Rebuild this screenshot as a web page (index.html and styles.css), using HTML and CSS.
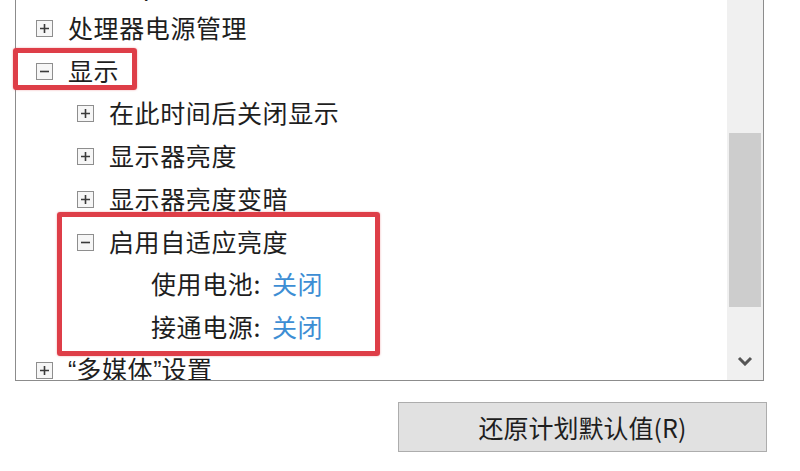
FILE: index.html
```html
<!DOCTYPE html>
<html lang="zh-CN">
<head>
<meta charset="utf-8">
<link rel="stylesheet" href="styles.css">
</head>
<body>
<div class="window">
  <div class="tree">
    <div class="list">
      <div class="row lvl0"><svg class="exp" viewBox="0 0 17 17"><rect x="0.5" y="0.5" width="16" height="16"/><path d="M4 8.5h9M8.5 4v9"/></svg><span class="label">PCI Express</span></div>
      <div class="row lvl0"><svg class="exp" viewBox="0 0 17 17"><rect x="0.5" y="0.5" width="16" height="16"/><path d="M4 8.5h9M8.5 4v9"/></svg><span class="label">处理器电源管理</span></div>
      <div class="row lvl0"><svg class="exp" viewBox="0 0 17 17"><rect x="0.5" y="0.5" width="16" height="16"/><path d="M4 8.5h9"/></svg><span class="label">显示</span></div>
      <div class="row lvl1"><svg class="exp" viewBox="0 0 17 17"><rect x="0.5" y="0.5" width="16" height="16"/><path d="M4 8.5h9M8.5 4v9"/></svg><span class="label">在此时间后关闭显示</span></div>
      <div class="row lvl1"><svg class="exp" viewBox="0 0 17 17"><rect x="0.5" y="0.5" width="16" height="16"/><path d="M4 8.5h9M8.5 4v9"/></svg><span class="label">显示器亮度</span></div>
      <div class="row lvl1"><svg class="exp" viewBox="0 0 17 17"><rect x="0.5" y="0.5" width="16" height="16"/><path d="M4 8.5h9M8.5 4v9"/></svg><span class="label">显示器亮度变暗</span></div>
      <div class="row lvl1"><svg class="exp" viewBox="0 0 17 17"><rect x="0.5" y="0.5" width="16" height="16"/><path d="M4 8.5h9"/></svg><span class="label">启用自适应亮度</span></div>
      <div class="row lvl2"><span class="label">使用电池:</span><span class="value">关闭</span></div>
      <div class="row lvl2"><span class="label">接通电源:</span><span class="value">关闭</span></div>
      <div class="row lvl0"><svg class="exp" viewBox="0 0 17 17"><rect x="0.5" y="0.5" width="16" height="16"/><path d="M4 8.5h9M8.5 4v9"/></svg><span class="label"><span class="q">“</span>多媒体<span class="q">”</span>设置</span></div>
    </div>
    <div class="scroll">
      <div class="thumb"></div>
      <div class="arrow"><svg width="16" height="10" viewBox="0 0 16 10"><path d="M2 2l6 6 6-6" fill="none" stroke="#555555" stroke-width="3"/></svg></div>
    </div>
  </div>
  <div class="actions">
    <button class="btn">还原计划默认值(R)</button>
  </div>
  <div class="mark mark-a"></div>
  <div class="mark mark-b"></div>
</div>
</body>
</html>
```

FILE: styles.css
```css
html, body {
  margin: 0;
  padding: 0;
  background: #ffffff;
}
body {
  font-family: "Noto Sans CJK SC", "Noto Sans", sans-serif;
  color: #1e1e1e;
}
.window {
  position: relative;
  width: 800px;
  height: 471px;
  overflow: hidden;
}
.tree {
  display: flex;
  box-sizing: border-box;
  margin: -40px 0 0 15px;
  width: 749px;
  height: 421px;
  border: 1px solid #8c8c8c;
  overflow: hidden;
  background: #fff;
}
.list {
  flex: 1;
  padding-top: 3.25px;
}
.row {
  display: flex;
  align-items: center;
  height: 42.75px;
  font-size: 25px;
  letter-spacing: 0.6px;
  line-height: 1;
  white-space: nowrap;
}
.row .label {
  position: relative;
  top: -1px;
}
.lvl0 { padding-left: 20px; }
.lvl1 { padding-left: 61px; }
.lvl2 { padding-left: 135px; }
.exp {
  width: 17px;
  height: 17px;
  margin-right: 15px;
  flex: none;
}
.exp rect {
  fill: #f6f6f6;
  stroke: #8e8e8e;
}
.exp path {
  stroke: #3a3a3a;
  stroke-width: 1.6;
  fill: none;
}
.value {
  color: #3d8ed4;
  margin-left: 11px;
  position: relative;
  top: -1px;
}
.q {
  font-family: "Liberation Sans", sans-serif;
  letter-spacing: 0;
}
.scroll {
  width: 36px;
  flex: none;
  background: #f0f0f0;
  display: flex;
  flex-direction: column;
  align-items: center;
}
.thumb {
  margin-top: 172px;
  width: 32px;
  height: 174px;
  background: #cdcdcd;
}
.arrow {
  margin-top: auto;
  height: 39px;
  width: 100%;
  display: flex;
  align-items: center;
  justify-content: center;
}
.actions {
  display: flex;
  padding: 21px 0 0 398px;
}
.btn {
  box-sizing: border-box;
  width: 369px;
  height: 50px;
  background: #e1e1e1;
  border: 1px solid #adadad;
  font-family: "Noto Sans CJK SC", "Noto Sans", sans-serif;
  font-size: 25px;
  color: #1e1e1e;
  padding: 0;
  line-height: 1;
}
.mark {
  position: absolute;
  box-sizing: border-box;
  border: 5px solid #de3e48;
  border-radius: 3px;
  box-shadow: 0 0 2px rgba(222, 62, 72, 0.5);
}
.mark-a {
  left: 13px;
  top: 48px;
  width: 124px;
  height: 42px;
}
.mark-b {
  left: 57px;
  top: 212px;
  width: 323px;
  height: 144px;
}
```
